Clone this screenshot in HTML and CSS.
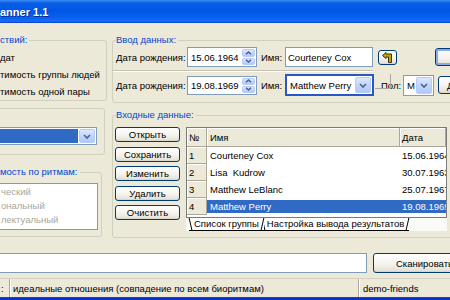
FILE: index.html
```html
<!DOCTYPE html>
<html lang="ru">
<head>
    <meta charset="UTF-8">
    <title>Scanner 1.1</title>
    <link rel="stylesheet" href="styles.css">
</head>
<body>
<div class="window">
    <div class="titlebar"><span class="title">anner 1.1</span></div>

    <div class="client">
        <div class="left-col">
            <fieldset class="group mode-group">
                <legend>ствий:</legend>
                <div class="opt">дат</div>
                <div class="opt">тимость группы людей</div>
                <div class="opt">тимость одной пары</div>
            </fieldset>
            <fieldset class="group file-group">
                <div class="combo combo-selected">
                    <span class="combo-text"></span>
                    <span class="drop-btn"><svg width="8" height="5" viewBox="0 0 8 5"><path d="M1 1l3 3 3-3" fill="none" stroke="#4d6185" stroke-width="1.6"/></svg></span>
                </div>
            </fieldset>
            <fieldset class="group rhythm-group">
                <legend>мость по ритмам:</legend>
                <div class="listbox">
                    <div class="list-item">ческий</div>
                    <div class="list-item">ональный</div>
                    <div class="list-item">лектуальный</div>
                </div>
            </fieldset>
        </div>

        <div class="right-col">
            <fieldset class="group entry-group">
                <legend>Ввод данных:</legend>
                <div class="entry-row">
                    <span class="lbl lbl-date">Дата рождения:</span>
                    <div class="date-edit">
                        <span class="edit-text">15.06.1964</span>
                        <span class="spin">
                            <span class="spin-btn"><svg width="7" height="4" viewBox="0 0 7 4"><path d="M1 3.3l2.5-2.3 2.5 2.3" fill="none" stroke="#4d6185" stroke-width="1.4"/></svg></span>
                            <span class="spin-btn"><svg width="7" height="4" viewBox="0 0 7 4"><path d="M1 0.7l2.5 2.3 2.5-2.3" fill="none" stroke="#4d6185" stroke-width="1.4"/></svg></span>
                        </span>
                    </div>
                    <span class="lbl lbl-name">Имя:</span>
                    <div class="edit name-edit">Courteney Cox</div>
                    <button class="btn icon-btn"><svg width="11" height="11" viewBox="0 0 11 11"><path d="M0.5 3.5L4 0.5V2H9.5V10.5H6.5V5H4V6.5Z" fill="#c9a400" stroke="#3a3300" stroke-width="1" stroke-linejoin="round"/></svg></button>
                    <button class="btn default-btn"></button>
                </div>
                <div class="sep"></div>
                <div class="entry-row row-two">
                    <span class="lbl lbl-date">Дата рождения:</span>
                    <div class="date-edit date-two">
                        <span class="edit-text">19.08.1969</span>
                        <span class="spin">
                            <span class="spin-btn"><svg width="7" height="4" viewBox="0 0 7 4"><path d="M1 3.3l2.5-2.3 2.5 2.3" fill="none" stroke="#4d6185" stroke-width="1.4"/></svg></span>
                            <span class="spin-btn"><svg width="7" height="4" viewBox="0 0 7 4"><path d="M1 0.7l2.5 2.3 2.5-2.3" fill="none" stroke="#4d6185" stroke-width="1.4"/></svg></span>
                        </span>
                    </div>
                    <span class="lbl lbl-name">Имя:</span>
                    <div class="combo name-combo">
                        <span class="combo-text">Matthew Perry</span>
                        <span class="drop-btn"><svg width="8" height="5" viewBox="0 0 8 5"><path d="M1 1l3 3 3-3" fill="none" stroke="#4d6185" stroke-width="1.6"/></svg></span>
                    </div>
                    <span class="lbl lbl-sex">Пол:</span>
                    <div class="combo sex-combo">
                        <span class="combo-text">М</span>
                        <span class="drop-btn"><svg width="8" height="5" viewBox="0 0 8 5"><path d="M1 1l3 3 3-3" fill="none" stroke="#4d6185" stroke-width="1.6"/></svg></span>
                    </div>
                    <button class="btn add-btn">Д</button>
                </div>
                <span class="link-line"></span>
            </fieldset>

            <fieldset class="group data-group">
                <legend>Входные данные:</legend>
                <div class="data-body">
                    <div class="btn-col">
                        <button class="btn side-btn">Открыть</button>
                        <button class="btn side-btn">Сохранить</button>
                        <button class="btn side-btn">Изменить</button>
                        <button class="btn side-btn">Удалить</button>
                        <button class="btn side-btn">Очистить</button>
                    </div>
                    <div class="grid-wrap">
                        <div class="grid">
                            <div class="grid-row head">
                                <span class="cell fixed">№</span>
                                <span class="cell fixed c-name">Имя</span>
                                <span class="cell fixed c-date">Дата</span>
                            </div>
                            <div class="grid-row">
                                <span class="cell fixed">1</span>
                                <span class="cell c-name">Courteney Cox</span>
                                <span class="cell c-date">15.06.1964</span>
                            </div>
                            <div class="grid-row">
                                <span class="cell fixed">2</span>
                                <span class="cell c-name">Lisa&nbsp; Kudrow</span>
                                <span class="cell c-date">30.07.1963</span>
                            </div>
                            <div class="grid-row">
                                <span class="cell fixed">3</span>
                                <span class="cell c-name">Matthew LeBlanc</span>
                                <span class="cell c-date">25.07.1967</span>
                            </div>
                            <div class="grid-row selected">
                                <span class="cell fixed">4</span>
                                <span class="cell c-name">Matthew Perry</span>
                                <span class="cell c-date">19.08.1969</span>
                            </div>
                        </div>
                        <div class="tabs">
                            <span class="tab active">Список группы</span>
                            <span class="tab">Настройка вывода результатов</span>
                        </div>
                    </div>
                </div>
            </fieldset>
        </div>
    </div>

    <div class="scan-row">
        <div class="edit scan-edit"></div>
        <button class="btn scan-btn">Сканировать</button>
    </div>

    <div class="statusbar">
        <span class="panel p-first">:</span>
        <span class="panel p-mid">идеальные отношения (совпадение по всем биоритмам)</span>
        <span class="panel p-last">demo-friends</span>
    </div>
    <div class="frame-bottom"></div>
</div>
</body>
</html>
```

FILE: styles.css
```css
* {
    box-sizing: border-box;
}
body {
    margin: 0;
    width: 450px;
    height: 300px;
    overflow: hidden;
    font-family: 'Liberation Sans', Arial, sans-serif;
    font-size: 9.5px;
    color: #000;
    background: #ece9d8;
}
.window {
    width: 450px;
    height: 300px;
    overflow: hidden;
    display: flex;
    flex-direction: column;
}
.titlebar {
    flex: none;
    height: 23px;
    display: flex;
    align-items: center;
    background: linear-gradient(180deg, #3c8ef8 0, #0a5fe6 12%, #0055e5 45%, #0a62f0 80%, #1a6cf6 92%, #0a3fc8 100%);
}
.title {
    color: #fff;
    font-weight: bold;
    font-size: 11px;
    text-shadow: 1px 1px #0a2a8a;
}

/* group boxes */
.client {
    flex: none;
    display: flex;
    padding-top: 11px;
}
.group {
    margin: 0;
    padding: 0;
    min-width: 0;
    border: 1px solid #d0d0bf;
    border-radius: 3px;
}
.group legend {
    padding: 0 2px 0 0;
    line-height: 12px;
    height: 12px;
    color: #0046d5;
}
.left-col {
    flex: none;
    width: 115px;
    margin-left: -8px;
    display: flex;
    flex-direction: column;
}
.mode-group {
    padding: 3px 0 0 7px;
}
.opt {
    height: 17px;
    line-height: 17px;
    white-space: nowrap;
}
.file-group {
    margin: 7px 2px 0 0;
    padding: 18px 0 9px 0;
}
.rhythm-group {
    margin: 11px 5px 0 0;
    padding: 5px 0 6px 0;
}
.rhythm-group legend {
    margin-left: 7px;
}
.listbox {
    width: 105px;
    height: 47px;
    padding: 1px 0 0 7px;
    background: #fff;
    border: 1px solid #7f9db9;
}
.list-item {
    height: 14px;
    line-height: 14px;
    color: #a7a69b;
}

/* edits, combos, buttons */
.edit, .date-edit, .combo {
    flex: none;
    background: #fff;
    border: 1px solid #7f9db9;
}
.edit {
    padding-left: 2px;
    display: flex;
    align-items: center;
}
.date-edit {
    display: flex;
    width: 70px;
    height: 20px;
}
.date-two {
    height: 19px;
}
.edit-text {
    flex: 1;
    padding-left: 3px;
    display: flex;
    align-items: center;
}
.spin {
    flex: none;
    width: 15px;
    display: flex;
    flex-direction: column;
    gap: 1px;
    padding: 1px;
}
.spin-btn, .drop-btn {
    display: flex;
    align-items: center;
    justify-content: center;
    background: linear-gradient(180deg, #dde8fe 0, #c2d5fc 50%, #b1c8f8 100%);
    border: 1px solid #b5cbf9;
    border-radius: 2px;
}
.spin-btn {
    flex: 1;
}
.combo {
    display: flex;
}
.combo-text {
    flex: 1;
    min-width: 0;
    padding-left: 3px;
    display: flex;
    align-items: center;
    white-space: nowrap;
    overflow: hidden;
}
.drop-btn {
    flex: none;
    width: 16px;
    margin: 1px;
}
.combo-selected {
    width: 104px;
    height: 18px;
}
.combo-selected .combo-text {
    background: #316ac5;
    margin: 1px 0;
}
.btn {
    flex: none;
    font: inherit;
    color: #000;
    padding: 0;
    background: linear-gradient(180deg, #fff 0, #f4f3ee 55%, #e6e3d8 90%, #d6d0c5 100%);
    border: 1px solid #003c74;
    border-radius: 3px;
}

/* data entry */
.right-col {
    flex: none;
    width: 400px;
    margin-left: 5px;
}
.entry-group {
    position: relative;
    padding: 1px 0 6px 3px;
}
.entry-row {
    display: flex;
    align-items: center;
    height: 20px;
}
.row-two {
    height: 22px;
    margin-top: 2px;
}
.lbl {
    flex: none;
    white-space: nowrap;
}
.lbl-date {
    width: 71px;
}
.lbl-name {
    width: 24px;
    margin-left: 4px;
}
.name-edit {
    width: 88px;
    height: 20px;
}
.icon-btn {
    width: 19px;
    height: 15px;
    margin-left: 5px;
    display: flex;
    align-items: center;
    justify-content: center;
}
.default-btn {
    width: 60px;
    height: 18px;
    margin-left: 38px;
    box-shadow: inset 0 0 0 2px #8aaae6;
}
.sep {
    width: 260px;
    height: 2px;
    margin: 3px 0 0 -3px;
    border-top: 1px solid #c5c2b2;
    border-bottom: 1px solid #fff;
}
.name-combo {
    width: 89px;
    height: 22px;
    border: 2px solid #2a56c6;
}
.lbl-sex {
    width: 22px;
    margin-left: 7px;
}
.sex-combo {
    width: 31px;
    height: 21px;
}
.add-btn {
    width: 40px;
    height: 18px;
    margin-left: 4px;
    text-align: left;
    padding-left: 8px;
}
.link-line {
    position: absolute;
    left: 262px;
    top: 28px;
    width: 16px;
    height: 15px;
    border-right: 1px solid #a8a69a;
    border-bottom: 1px solid #a8a69a;
}

/* input data */
.data-group {
    margin-top: 6px;
    padding: 6px 0 6px 2px;
}
.data-group legend {
    margin-left: 1px;
}
.data-body {
    display: flex;
    align-items: flex-start;
}
.btn-col {
    flex: none;
    width: 65px;
    display: flex;
    flex-direction: column;
    gap: 4.5px;
}
.side-btn {
    height: 15px;
}
.grid-wrap {
    flex: none;
    width: 261px;
    margin-left: 6px;
}
.grid {
    height: 91px;
    overflow: hidden;
    background: #fff;
    border: 1px solid #7a7a7a;
}
.grid-row {
    display: flex;
    height: 17px;
}
.grid-row.head {
    height: 19px;
}
.cell {
    flex: none;
    width: 20px;
    padding-left: 2px;
    display: flex;
    align-items: center;
    white-space: nowrap;
}
.cell.fixed {
    background: #ece9d8;
    border-right: 1px solid #aca899;
    border-bottom: 1px solid #aca899;
    box-shadow: inset 1px 1px #fff;
}
.c-name {
    width: 193px;
    padding-left: 3px;
}
.cell.c-date {
    flex: 1;
    padding-left: 2px;
}
.selected .c-name, .selected .c-date {
    margin: 2px 0;
    background: #316ac5;
    color: #fff;
}
.tabs {
    display: flex;
    height: 13px;
    padding-left: 3px;
    background: #fafaf7;
}
.tab {
    position: relative;
    height: 13px;
    line-height: 12px;
    padding: 0 5px;
    white-space: nowrap;
    background: #fff;
    border-bottom: 1px solid #000;
}
.tab::before, .tab::after {
    content: '';
    position: absolute;
    top: 0;
    bottom: 0;
    width: 1px;
    background: #000;
}
.tab::before {
    left: 1px;
    transform: skewX(13deg);
}
.tab::after {
    right: 1px;
    transform: skewX(-13deg);
}
.tab.active {
    z-index: 1;
}
.tab + .tab {
    margin-left: -2px;
}

/* bottom */
.scan-row {
    flex: none;
    display: flex;
    margin: 15px 0 0 -5px;
}
.scan-edit {
    width: 372px;
    height: 20px;
}
.scan-btn {
    width: 100px;
    height: 20px;
    margin-left: 6px;
    text-align: left;
    padding-left: 22px;
}
.statusbar {
    flex: none;
    display: flex;
    height: 19px;
    margin-top: 5px;
    border-top: 1px solid #d6d2c2;
}
.panel {
    display: flex;
    align-items: center;
    white-space: nowrap;
    border-right: 1px solid #aca899;
    box-shadow: 1px 0 #fff;
}
.p-first {
    flex: none;
    width: 10px;
    padding-left: 1px;
}
.p-mid {
    flex: none;
    width: 349px;
    padding-left: 3px;
}
.p-last {
    flex: 1;
    padding-left: 4px;
    border-right: none;
}
.frame-bottom {
    flex: 1;
    background: linear-gradient(180deg, #1b49d0 0, #0831d9 40%, #0a2fb8 100%);
}
```
